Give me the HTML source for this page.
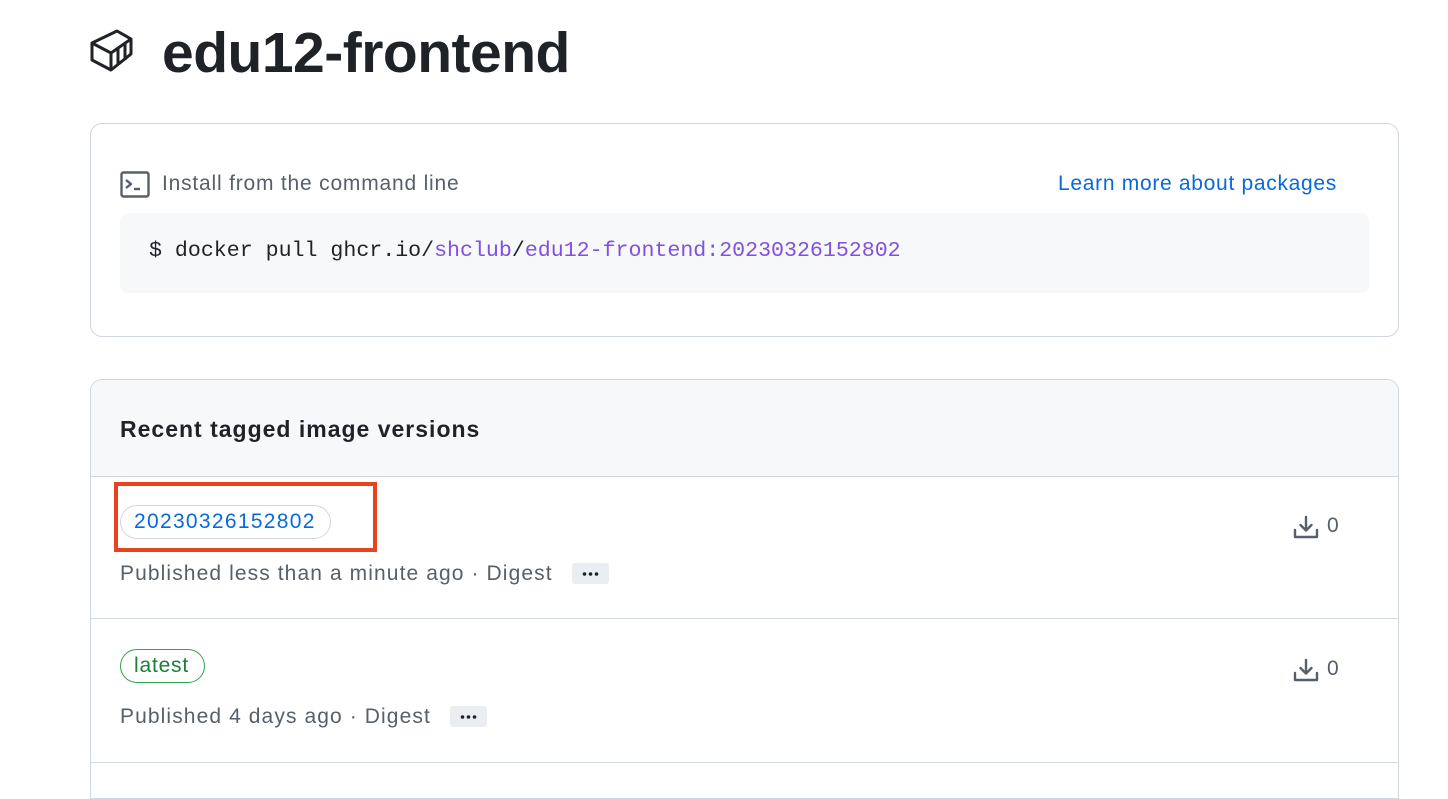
<!DOCTYPE html>
<html><head><meta charset="utf-8"><style>
*{box-sizing:border-box;margin:0;padding:0}
body{width:1448px;height:778px;overflow:hidden;background:#fff;font-family:"Liberation Sans",sans-serif;color:#1f2328;position:relative}
.abs{position:absolute}
h1{position:absolute;left:162px;top:18px;font-size:57px;font-weight:bold;letter-spacing:-0.5px;line-height:70px;color:#1f2328}
.box1{left:90px;top:123px;width:1309px;height:214px;border:1px solid #d0d7de;border-radius:12px}
.code{left:120px;top:213px;width:1249px;height:80px;background:#f6f8fa;border-radius:8px}
.mono{font-family:"Liberation Mono",monospace;font-size:21.6px;left:149px;top:239px;color:#1f2328;white-space:pre}
.p{color:#8250df}
.t20{font-size:21px;line-height:24px;white-space:nowrap;letter-spacing:0.8px}
.box2{left:90px;top:379px;width:1309px;height:420px;border:1px solid #d0d7de;border-radius:12px 12px 0 0;overflow:hidden}
.hdr{position:absolute;left:0;top:0;right:0;height:97px;background:#f6f8fa;border-bottom:1px solid #d0d7de}
.row{position:absolute;left:0;right:0;border-bottom:1px solid #d0d7de}
.pill{position:absolute;border:1px solid #d0d7de;border-radius:17px;height:34px;font-size:21px;line-height:32px;padding:0 13px;white-space:nowrap}
.dots{position:absolute;width:37px;height:21px;background:#eaeef2;border-radius:3px}
.gray{color:#57606a}
</style></head><body>
<svg class="abs" style="left:90px;top:29px" width="44" height="44" viewBox="0 0 44 44" fill="none" stroke="#1f2328" stroke-width="3" stroke-linejoin="round">
<path d="M2 14 L27 2 L41 10 L41 25 L21 41 L2 31 Z"/><path d="M2 14 L21 24 L41 10"/><path d="M21 24 L21 41"/><path d="M28 19 L28 36"/><path d="M35 15 L35 31"/>
</svg>
<h1>edu12-frontend</h1>
<div class="abs box1"></div>
<svg class="abs" style="left:120px;top:171px" width="30" height="27" viewBox="0 0 30 27" fill="none" stroke="#57606a" stroke-width="2.4">
<rect x="1.5" y="1.5" width="27" height="24" rx="2"/><path d="M6 9 L11 13 L6 17" stroke-linejoin="round"/><path d="M14 18 L20 18"/>
</svg>
<div class="abs t20 gray" style="left:162px;top:172px">Install from the command line</div>
<div class="abs t20" style="left:1058px;top:172px;color:#0969da;letter-spacing:0.7px">Learn more about packages</div>
<div class="abs code"></div>
<div class="abs mono">$ docker pull ghcr.io/<span class="p">shclub</span>/<span class="p">edu12-frontend:20230326152802</span></div>
<div class="abs box2">
<div class="hdr"><div class="abs" style="left:29px;top:35px;font-size:23px;font-weight:bold;line-height:28px;letter-spacing:1px;white-space:nowrap">Recent tagged image versions</div></div>
<div class="row" style="top:97px;height:142px"></div>
<div class="row" style="top:239px;height:144px"></div>
</div>
<div class="pill" style="left:120px;top:505px;width:211px;color:#0969da;letter-spacing:1.3px">20230326152802</div>
<div class="abs" style="left:114px;top:482px;width:263px;height:70px;border:4px solid #e8431f"></div>
<div class="abs t20 gray" style="left:120px;top:562px;letter-spacing:1.1px">Published less than a minute ago · Digest</div>
<div class="dots" style="left:572px;top:563px"><svg width="37" height="21"><circle cx="12.5" cy="11" r="1.8" fill="#1f2328"/><circle cx="18.5" cy="11" r="1.8" fill="#1f2328"/><circle cx="24.5" cy="11" r="1.8" fill="#1f2328"/></svg></div>
<div class="pill" style="left:120px;top:649px;width:85px;border-color:#2da44e;color:#1a7f37;letter-spacing:0.8px">latest</div>
<div class="abs t20 gray" style="left:120px;top:705px;letter-spacing:1.1px">Published 4 days ago · Digest</div>
<div class="dots" style="left:450px;top:706px"><svg width="37" height="21"><circle cx="12.5" cy="11" r="1.8" fill="#1f2328"/><circle cx="18.5" cy="11" r="1.8" fill="#1f2328"/><circle cx="24.5" cy="11" r="1.8" fill="#1f2328"/></svg></div>
<svg class="abs" style="left:1293px;top:514px" width="26" height="26" viewBox="0 0 26 26" fill="none" stroke="#57606a" stroke-width="2.4" stroke-linecap="round" stroke-linejoin="round"><path d="M2 16 V23 H24 V16"/><path d="M13 3 V16"/><path d="M7.5 11 L13 16.5 L18.5 11"/></svg>
<div class="abs t20 gray" style="left:1327px;top:514px">0</div>
<svg class="abs" style="left:1293px;top:657px" width="26" height="26" viewBox="0 0 26 26" fill="none" stroke="#57606a" stroke-width="2.4" stroke-linecap="round" stroke-linejoin="round"><path d="M2 16 V23 H24 V16"/><path d="M13 3 V16"/><path d="M7.5 11 L13 16.5 L18.5 11"/></svg>
<div class="abs t20 gray" style="left:1327px;top:657px">0</div>
</body></html>
